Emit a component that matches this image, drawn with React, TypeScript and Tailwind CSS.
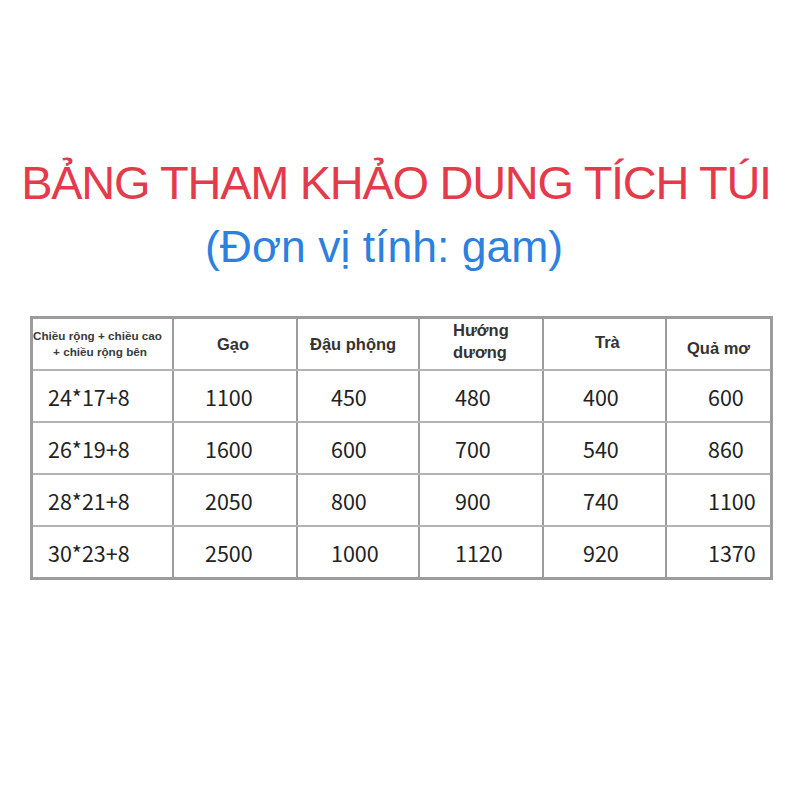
const headers = [
  { label: "Gạo", pad: "pl-[43px]", extra: "" },
  { label: "Đậu phộng", pad: "pl-[12px]", extra: "" },
  { label: "Hướng dương", pad: "pl-[33px]", extra: "" },
  { label: "Trà", pad: "pl-[51px]", extra: "pb-[4px]" },
  { label: "Quả mơ", pad: "pl-[20px]", extra: "pt-[8px]" },
];

const rows = [
  ["24*17+8", "1100", "450", "480", "400", "600"],
  ["26*19+8", "1600", "600", "700", "540", "860"],
  ["28*21+8", "2050", "800", "900", "740", "1100"],
  ["30*23+8", "2500", "1000", "1120", "920", "1370"],
];

const widths = ["w-[141px]", "w-[124px]", "w-[122px]", "w-[124px]", "w-[123px]", "w-[103px]"];
const dataPad = ["pl-[15px]", "pl-[31px]", "pl-[33px]", "pl-[35px]", "pl-[39px]", "pl-[41px]"];

export default function App() {
  return (
    <div className="w-[800px] h-[800px] bg-white overflow-hidden">
      <div className="pt-[155px] text-center">
        <h1 className="text-[47px] leading-[56px] tracking-[-1.3px] text-[#e43a4c] font-['Liberation_Sans',Arial,sans-serif] pr-[8px]">
          BẢNG THAM KHẢO DUNG TÍCH TÚI
        </h1>
        <p className="mt-[11px] text-[44.5px] leading-[49px] text-[#2b80e0] font-['Liberation_Sans',Arial,sans-serif] pr-[32px]">
          (Đơn vị tính: gam)
        </p>
      </div>

      <div className="ml-[30px] mt-[45px] w-[743px] border-[3px] border-[#9c9c9c]">
        <div className="flex h-[52px] border-b-2 border-[#b4b4b4]">
          <div className={`${widths[0]} flex flex-col justify-center items-center text-[11.7px] leading-[16px] text-[#3a3a3a] font-['Liberation_Sans',Arial,sans-serif] font-bold border-r-2 border-[#9c9c9c] overflow-hidden whitespace-nowrap`}>
            <span className="-ml-[10px]">Chiều rộng + chiều cao</span>
            <span className="-ml-[5px]">+ chiều rộng bên</span>
          </div>
          {headers.map((h, i) => (
            <div
              key={h.label}
              className={`${widths[i + 1]} ${h.pad} ${h.extra} flex items-center text-[16.5px] leading-[22px] text-[#333] font-['Liberation_Sans',Arial,sans-serif] font-bold ${i < headers.length - 1 ? "border-r-2 border-[#9c9c9c]" : ""}`}
            >
              {h.label === "Hướng dương" ? (
                <span className="-mt-[7px]">
                  Hướng
                  <br />
                  dương
                </span>
              ) : (
                h.label
              )}
            </div>
          ))}
        </div>
        {rows.map((r, ri) => (
          <div
            key={r[0]}
            className={`flex ${ri < rows.length - 1 ? "h-[52px] border-b-2 border-[#b4b4b4]" : "h-[50px]"}`}
          >
            {r.map((c, ci) => (
              <div
                key={ci}
                className={`${widths[ci]} ${dataPad[ci]} pt-[2px] flex items-center text-[21.5px] text-[#222] font-['Noto_Sans_CJK_SC','Noto_Sans',sans-serif] ${ci < r.length - 1 ? "border-r-2 border-[#9c9c9c]" : ""}`}
              >
                {c}
              </div>
            ))}
          </div>
        ))}
      </div>
    </div>
  );
}
